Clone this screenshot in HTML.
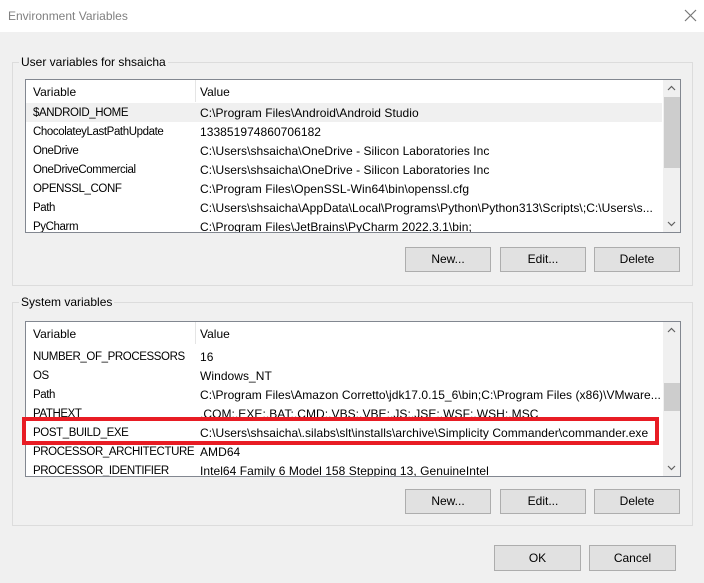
<!DOCTYPE html>
<html><head><style>
*{margin:0;padding:0;box-sizing:border-box}
body{width:704px;height:583px;background:#f0f0f0;font-family:"Liberation Sans",sans-serif;font-size:12px;color:#000;position:relative;overflow:hidden}
.a{position:absolute}
.title{left:0;top:0;width:704px;height:32px;background:#fff}
.title span{position:absolute;left:8px;top:9px;color:#808080;font-size:12px}
.grp{border:1px solid #dcdcdc}
.lbl{background:#f0f0f0;padding:0 2px}
.list{background:#fff;border:1px solid #828790;overflow:hidden}
.row{position:absolute;left:0;height:19px;width:636px;white-space:nowrap}
.row span{position:absolute;top:3px}
.row .v{left:7px;top:4px;font-size:11.5px;letter-spacing:-0.4px}.row .w{left:174px;letter-spacing:0.05px}
.hdr{position:absolute;left:0;top:0;width:636px;height:22px;background:#fff}
.hdr span{position:absolute;top:5px}
.sb{position:absolute;right:0;top:0;width:17px;height:100%;background:#f0f0f0}
.th{position:absolute;left:1px;width:16px;background:#cdcdcd}
.btn{position:absolute;border:1px solid #adadad;background:#e1e1e1;text-align:center;line-height:23px}
</style></head><body>
<div class="a title"><span>Environment Variables</span>
<svg class="a" style="left:684px;top:9px" width="13" height="13"><path d="M1 1L12 12M12 1L1 12" stroke="#777" stroke-width="1.2"/></svg></div>

<div class="a grp" style="left:12px;top:62px;width:681px;height:224px"></div>
<div class="a lbl" style="left:19px;top:55px">User variables for shsaicha</div>
<div class="a list" style="left:25px;top:79px;width:656px;height:154px">
<div class="hdr"><span style="left:7px">Variable</span><span style="left:174px">Value</span><div class="a" style="left:169px;top:0;width:1px;height:22px;background:#e5e5e5"></div></div>
<div class="row" style="top:23px;background:#f0f0f0"><span class="v">$ANDROID_HOME</span><span class="w">C:\Program Files\Android\Android Studio</span></div>
<div class="row" style="top:42px"><span class="v">ChocolateyLastPathUpdate</span><span class="w">133851974860706182</span></div>
<div class="row" style="top:61px"><span class="v">OneDrive</span><span class="w">C:\Users\shsaicha\OneDrive - Silicon Laboratories Inc</span></div>
<div class="row" style="top:80px"><span class="v">OneDriveCommercial</span><span class="w">C:\Users\shsaicha\OneDrive - Silicon Laboratories Inc</span></div>
<div class="row" style="top:99px"><span class="v">OPENSSL_CONF</span><span class="w">C:\Program Files\OpenSSL-Win64\bin\openssl.cfg</span></div>
<div class="row" style="top:118px"><span class="v">Path</span><span class="w">C:\Users\shsaicha\AppData\Local\Programs\Python\Python313\Scripts\;C:\Users\s...</span></div>
<div class="row" style="top:137px"><span class="v">PyCharm</span><span class="w">C:\Program Files\JetBrains\PyCharm 2022.3.1\bin;</span></div>
<div class="sb"><div class="th" style="top:17px;height:71px"></div>
<svg class="a" style="left:4px;top:5px" width="9" height="6"><path d="M1 5L4.5 1.5L8 5" stroke="#606060" fill="none" stroke-width="1.2"/></svg>
<svg class="a" style="left:4px;top:141px" width="9" height="6"><path d="M1 1L4.5 4.5L8 1" stroke="#606060" fill="none" stroke-width="1.2"/></svg></div>
</div>
<div class="btn" style="left:405px;top:247px;width:86px;height:25px">New...</div>
<div class="btn" style="left:500px;top:247px;width:86px;height:25px">Edit...</div>
<div class="btn" style="left:594px;top:247px;width:86px;height:25px">Delete</div>

<div class="a grp" style="left:12px;top:302px;width:681px;height:224px"></div>
<div class="a lbl" style="left:19px;top:295px">System variables</div>
<div class="a list" style="left:25px;top:321px;width:656px;height:156px">
<div class="hdr"><span style="left:7px">Variable</span><span style="left:174px">Value</span><div class="a" style="left:169px;top:0;width:1px;height:22px;background:#e5e5e5"></div></div>
<div class="row" style="top:25px"><span class="v">NUMBER_OF_PROCESSORS</span><span class="w">16</span></div>
<div class="row" style="top:44px"><span class="v">OS</span><span class="w">Windows_NT</span></div>
<div class="row" style="top:63px"><span class="v">Path</span><span class="w">C:\Program Files\Amazon Corretto\jdk17.0.15_6\bin;C:\Program Files (x86)\VMware...</span></div>
<div class="row" style="top:82px"><span class="v">PATHEXT</span><span class="w">.COM;.EXE;.BAT;.CMD;.VBS;.VBE;.JS;.JSE;.WSF;.WSH;.MSC</span></div>
<div class="row" style="top:101px"><span class="v">POST_BUILD_EXE</span><span class="w">C:\Users\shsaicha\.silabs\slt\installs\archive\Simplicity Commander\commander.exe</span></div>
<div class="row" style="top:120px"><span class="v">PROCESSOR_ARCHITECTURE</span><span class="w">AMD64</span></div>
<div class="row" style="top:139px"><span class="v">PROCESSOR_IDENTIFIER</span><span class="w">Intel64 Family 6 Model 158 Stepping 13, GenuineIntel</span></div>
<div class="sb"><div class="th" style="top:61px;height:28px"></div>
<svg class="a" style="left:4px;top:5px" width="9" height="6"><path d="M1 5L4.5 1.5L8 5" stroke="#606060" fill="none" stroke-width="1.2"/></svg>
<svg class="a" style="left:4px;top:143px" width="9" height="6"><path d="M1 1L4.5 4.5L8 1" stroke="#606060" fill="none" stroke-width="1.2"/></svg></div>
</div>
<div class="a" style="left:22px;top:417px;width:637px;height:28px;border:4px solid #e81c24"></div>
<div class="btn" style="left:405px;top:489px;width:86px;height:25px">New...</div>
<div class="btn" style="left:500px;top:489px;width:86px;height:25px">Edit...</div>
<div class="btn" style="left:594px;top:489px;width:86px;height:25px">Delete</div>

<div class="btn" style="left:494px;top:545px;width:87px;height:26px;line-height:24px">OK</div>
<div class="btn" style="left:589px;top:545px;width:87px;height:26px;line-height:24px">Cancel</div>
</body></html>
